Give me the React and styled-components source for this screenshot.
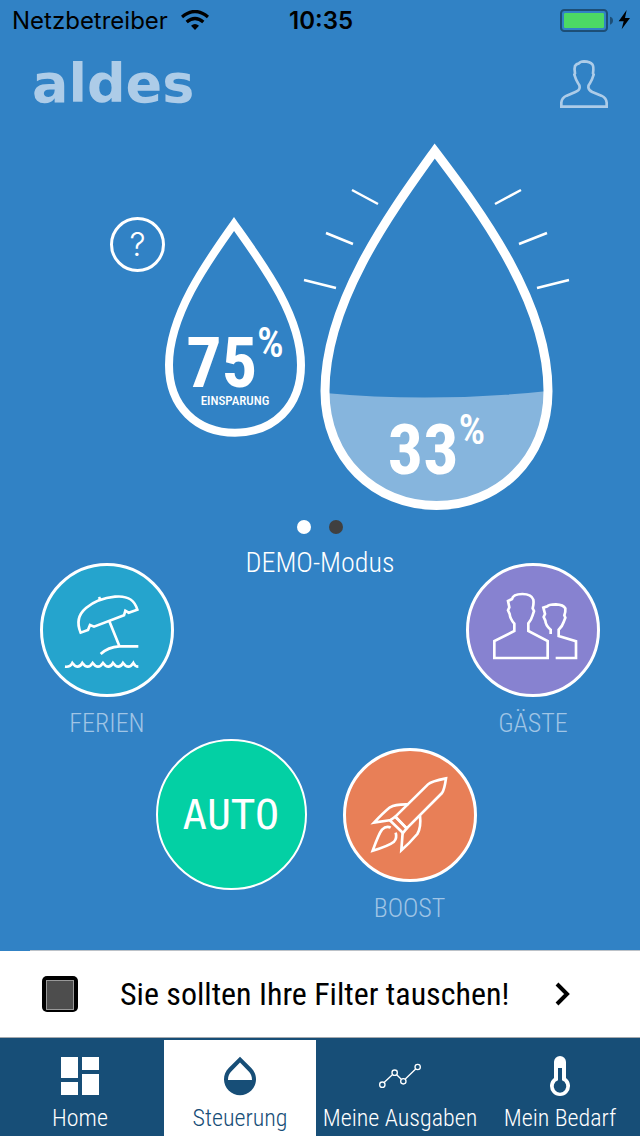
import React, { Component } from 'react'
import styled, { createGlobalStyle } from 'styled-components'

const GlobalStyle = createGlobalStyle`
  * {
    box-sizing: border-box;
  }

  body {
    margin: 0;
    background: #3182c5;
    font-family: "Roboto Condensed", "Liberation Sans Narrow", "Liberation Sans", sans-serif;
  }

  button {
    padding: 0;
    border: 0;
    background: none;
    color: inherit;
    font: inherit;
    cursor: pointer;
  }
`

const Page = styled.div`
  display: flex;
  flex-direction: column;
  min-height: 100vh;
  color: #fff;
`

const StatusBar = styled.div`
  display: grid;
  grid-template-columns: 1fr auto 1fr;
  align-items: center;
  height: 40px;
  padding: 0 10px 0 12px;
  color: #000;
  font-family: Inter, sans-serif;
  font-size: 24px;
`

const Carrier = styled.div`
  display: flex;
  align-items: center;
  gap: 13px;
`

const Clock = styled.time`
  font-weight: 600;
`

const Power = styled.div`
  display: flex;
  justify-content: flex-end;
`

const Header = styled.header`
  display: flex;
  align-items: center;
  justify-content: space-between;
  height: 88px;
  padding: 0 32px;
  color: #adcce8;
`

const Logo = styled.a`
  color: inherit;
  font-family: "DejaVu Sans", sans-serif;
  font-size: 54px;
  font-weight: 700;
  line-height: 60px;
  text-decoration: none;
`

const Account = styled.button`
  display: flex;
`

const Main = styled.main`
  display: flex;
  flex: 1;
  flex-direction: column;
`

const Drops = styled.section`
  display: flex;
  justify-content: center;
  padding: 16px 0 0 40px;
`

const Help = styled.button`
  width: 55px;
  height: 55px;
  margin-top: 73px;
  border: 3px solid #fff;
  border-radius: 50%;
  font-family: Inter, sans-serif;
  font-size: 32px;
  font-weight: 300;
  line-height: 48px;
`

const Drop = styled.div`
  display: grid;
  align-content: start;
  width: ${props => props.$width}px;
  margin-top: ${props => props.$top || 0}px;

  > * {
    grid-area: 1 / 1;
  }

  > svg {
    overflow: visible;
  }
`

const Reading = styled.div`
  display: flex;
  flex-direction: column;
  align-items: center;
  padding-top: ${props => props.$top}px;
`

const Value = styled.div`
  display: flex;
  align-items: flex-start;
  font-size: 70px;
  font-weight: 700;
  line-height: 60px;
`

const Percent = styled.span`
  font-size: 42px;
  font-weight: 500;
  line-height: 20px;
`

const Caption = styled.div`
  font-size: 13px;
  font-weight: 500;
  line-height: 16px;
`

const Dots = styled.div`
  display: flex;
  justify-content: center;
  gap: 18px;
  padding-top: 10px;
`

const Dot = styled.button`
  width: 14px;
  height: 14px;
  border-radius: 50%;
  background: ${props => (props.$active ? '#fff' : '#404040')};
`

const Modes = styled.section`
  display: flex;
  justify-content: space-between;
  padding: 13px 40px 0;
`

const Status = styled.div`
  font-size: 28px;
  font-weight: 300;
  line-height: 32px;
`

const CenterModes = styled.section`
  display: flex;
  justify-content: center;
  gap: 36px;
  padding: 0 8px 26px 0;
`

const Mode = styled.button`
  display: flex;
  flex-direction: column;
  align-items: center;
  align-self: flex-start;
  gap: 10px;
  margin-top: ${props => props.$top || 0}px;
`

const Disc = styled.span`
  display: flex;
  align-items: center;
  justify-content: center;
  width: ${props => props.$size || 134}px;
  height: ${props => props.$size || 134}px;
  border: ${props => props.$line || 3}px solid #fff;
  border-radius: 50%;
  background: ${props => props.$color};
`

const ModeName = styled.span`
  color: #a0c5e5;
  font-size: 26px;
  font-weight: 300;
  line-height: 32px;
`

const AutoText = styled.span`
  font-family: "DejaVu Sans Mono", monospace;
  font-size: 40px;
`

const Divider = styled.div`
  height: 1px;
  margin-left: 30px;
  background: #bcc2c8;
`

const Notice = styled.button`
  display: flex;
  align-items: center;
  height: 86px;
  padding: 0 69px 0 42px;
  background: #fff;
  color: #000;
  text-align: left;
`

const FilterIcon = styled.span`
  width: 36px;
  height: 36px;
  padding: 4px;
  border-radius: 5px;
  background: #000;

  &::before {
    content: "";
    display: block;
    height: 100%;
    border: 1px solid #999;
    background: #4d4d4d;
  }
`

const NoticeText = styled.span`
  flex: 1;
  padding-left: 42px;
  font-size: 32px;
  line-height: 40px;
`

const TabBar = styled.nav`
  display: flex;
  border-top: 1px solid #a5a9ad;
  background: #174e77;
`

const Tab = styled.a`
  display: flex;
  flex: 1 1 0;
  flex-direction: column;
  align-items: center;
  min-width: 0;
  height: 96px;
  margin: 2px 4px 0;
  padding-top: 12px;
  background: ${props => (props.$active ? '#fff' : 'none')};
  color: ${props => (props.$active ? '#174e77' : '#fff')};
  font-size: 24px;
  font-weight: 300;
  line-height: 36px;
  text-decoration: none;
  white-space: nowrap;
`

const Wifi = () => (
  <svg width="28" height="20" viewBox="543 30 84 60" fill="none" stroke="#000" strokeWidth="10">
    <path d="M546 51Q585 18 624 51" />
    <path d="M560 66Q585 45 610 66" />
    <path d="M573 77Q585 67 597 77L585 90Z" fill="#000" stroke="none" />
  </svg>
)

const Battery = () => (
  <svg width="70" height="23" viewBox="720 27 210 69">
    <rect x="723" y="30" width="138" height="63" rx="10" fill="none" stroke="#1d4e76" strokeWidth="6" />
    <rect x="732" y="39" width="120" height="45" rx="4" fill="#4cd964" />
    <path d="M870 50Q879 52 879 61.500Q879 71 870 74Z" fill="#1d4e76" />
    <path d="M920 30L896 64H911L905 88L930 54H915Z" fill="#000" />
  </svg>
)

const Person = () => (
  <svg width="48" height="48" viewBox="720 180 144 144" fill="none" stroke="currentColor" strokeWidth="8">
    <path d="M724 320V308Q725 294 740 287L766 276Q779 271 779 262Q779 255 775 251Q768 241 763 224L765 220Q762 207 765 198Q769 191 777 190Q781 184 792 184Q810 185 817 193Q822 200 819 220L821 224Q816 241 809 251Q805 255 805 262Q806 271 817 276L844 287Q859 294 860 308V320Z" />
  </svg>
)

const SmallDrop = () => (
  <svg width="140" height="220" viewBox="0 0 140 220">
    <path
      d="M69 7C42 45 4 98 4 148C4 190 32 215.700 70 215.700C108 215.700 136 190 136 148C136 98 96 45 69 7Z"
      fill="none"
      stroke="#fff"
      strokeWidth="8"
    />
  </svg>
)

const BigDrop = () => (
  <svg width="267" height="366" viewBox="0 0 267 366" fill="none" stroke="#fff">
    <path
      d="M22 249Q130 259 245 247C245 315 195 361.500 133.500 361.500C72 361.500 22 315 22 249Z"
      fill="#86b5dd"
      stroke="none"
    />
    <path
      d="M131.700 7C88 68 22 158 22 247C22 315 72 361.500 133.500 361.500C195 361.500 245 315 245 247C245 158 178 68 131.700 7Z"
      strokeWidth="9"
    />
    <path
      d="M49 46L75 60M23 89L50 100M1 136L33 144M192 60L218 46M216 100L244 89M234 144L266 136"
      strokeWidth="2.500"
    />
  </svg>
)

const Beach = () => (
  <svg width="128" height="128" viewBox="69 168 384 384" fill="none" stroke="#fff" strokeWidth="8">
    <path d="M182 368C171 342 172 316 198 294C222 274 254 263 285 260C326 256 344 271 352 299L326 308L316 302L312 316L222 350L210 345L204 360Z" />
    <path d="M237 261L242 271M268 334L298 408M355 409H298Q264 411 242 432" />
    <path d="M135 470Q151 472 157 459Q165 470 173 470Q181 470 187 459Q195 470 203 470Q211 470 218 459Q226 470 234 470Q242 470 249 459Q257 470 265 470Q273 470 279 459Q287 470 295 470Q303 470 309 459Q317 470 325 470Q333 470 340 459Q345 470 355 470" />
  </svg>
)

const Guests = () => (
  <svg width="128" height="128" viewBox="88 79 384 384" fill="none" stroke="#fff" strokeWidth="8">
    <path d="M164 355V304L224 274V252Q211 237 210 223L205 212L209 203L205 184L217 178Q220 163 248 163Q276 163 281 180Q283 191 279 206L283 214L278 229Q275 241 266 251V274L324 304V355Z" />
    <path d="M333 283V270Q318 258 317 243L312 232L316 223L311 204L323 200Q327 194 349 194Q371 195 377 206Q378 217 374 227L377 234L372 247Q368 260 357 270V289L409 305V355H348" />
  </svg>
)

const Rocket = () => (
  <svg width="128" height="128" viewBox="76 63 384 384" fill="none" stroke="#fff" strokeWidth="8">
    <path d="M224 260L322 163Q331 154 376 145Q371 180 364 189L258 295Z" />
    <path d="M224 260L258 295L247 309L208 271Z" />
    <path d="M263 223Q224 222 208 232Q188 248 160 278L212 270M298 257Q302 292 290 312Q266 340 242 361L246 307" />
    <path d="M210 293Q197 286 184 299Q175 310 156 362Q205 347 220 335Q230 325 225 308" />
  </svg>
)

const Chevron = () => (
  <svg width="16" height="24" viewBox="0 0 16 24" fill="none" stroke="#000" strokeWidth="4">
    <path d="M2 2L12 12L2 22" />
  </svg>
)

const icons = {
  home: (
    <svg width="48" height="48" viewBox="168 66 144 144" fill="currentColor">
      <path d="M183 81h51v63h-51zM183 156h51v39h-51zM246 81h51v39h-51zM246 132h51v63h-51z" />
    </svg>
  ),
  control: (
    <svg width="48" height="48" viewBox="0 0 24 24" fill="currentColor">
      <path d="M17.660 8L12 2.350 6.340 8C4.780 9.560 4 11.640 4 13.640s.78 4.110 2.340 5.670 3.610 2.350 5.660 2.350 4.100-.79 5.660-2.350S20 15.640 20 13.640 19.220 9.560 17.660 8zM6 14c.01-2 .62-3.270 1.760-4.400L12 5.270l4.240 4.380C17.380 10.770 17.990 12 18 14H6z" />
    </svg>
  ),
  costs: (
    <svg width="48" height="48" viewBox="168 66 144 144" fill="none" stroke="currentColor" strokeWidth="4">
      <path d="M193 157L217 134M230 134L243 147M256 147L287 117" />
      <circle cx="187" cy="164" r="8" />
      <circle cx="224" cy="128" r="8" />
      <circle cx="250" cy="154" r="8" />
      <circle cx="293" cy="111" r="8" />
    </svg>
  ),
  demand: (
    <svg width="48" height="48" viewBox="648 66 144 144">
      <path d="M702 96A18 18 0 0 1 738 96V144A30 30 0 1 1 702 144Z" fill="currentColor" />
      <path d="M714 114H726V151A19 19 0 1 1 714 151Z" fill="#174e77" />
    </svg>
  ),
}

const tabs = [
  { id: 'home', label: 'Home' },
  { id: 'control', label: 'Steuerung' },
  { id: 'costs', label: 'Meine Ausgaben' },
  { id: 'demand', label: 'Mein Bedarf' },
]

export default class App extends Component {

  state = { tab: 'control', slide: 0 }

  render() {
    const { tab, slide } = this.state

    return (
      <Page>
        <GlobalStyle />
        <StatusBar>
          <Carrier>Netzbetreiber <Wifi /></Carrier>
          <Clock>10:35</Clock>
          <Power><Battery /></Power>
        </StatusBar>
        <Header>
          <Logo href="#">aldes</Logo>
          <Account aria-label="Konto"><Person /></Account>
        </Header>
        <Main>
          <Drops>
            <Help>?</Help>
            <Drop $width={138} $top={73}>
              <SmallDrop />
              <Reading $top={116}>
                <Value>75<Percent>%</Percent></Value>
                <Caption>EINSPARUNG</Caption>
              </Reading>
            </Drop>
            <Drop $width={267}>
              <BigDrop />
              <Reading $top={276}>
                <Value>33<Percent>%</Percent></Value>
              </Reading>
            </Drop>
          </Drops>
          <Dots>
            {[0, 1].map(i => (
              <Dot
                key={i}
                aria-label={`Seite ${i + 1}`}
                $active={slide === i}
                onClick={() => this.setState({ slide: i })}
              />
            ))}
          </Dots>
          <Modes>
            <Mode $top={16}>
              <Disc $color="#25a4cd"><Beach /></Disc>
              <ModeName>FERIEN</ModeName>
            </Mode>
            <Status>DEMO-Modus</Status>
            <Mode $top={16}>
              <Disc $color="#8782d0"><Guests /></Disc>
              <ModeName>GÄSTE</ModeName>
            </Mode>
          </Modes>
          <CenterModes>
            <Mode>
              <Disc $color="#03d0a4" $size={151} $line={2}><AutoText>AUTO</AutoText></Disc>
            </Mode>
            <Mode $top={9}>
              <Disc $color="#e87f57"><Rocket /></Disc>
              <ModeName>BOOST</ModeName>
            </Mode>
          </CenterModes>
        </Main>
        <Divider />
        <Notice>
          <FilterIcon />
          <NoticeText>Sie sollten Ihre Filter tauschen!</NoticeText>
          <Chevron />
        </Notice>
        <TabBar>
          {tabs.map(({ id, label }) => (
            <Tab
              key={id}
              href={`#${id}`}
              $active={tab === id}
              onClick={() => this.setState({ tab: id })}
            >
              {icons[id]}
              {label}
            </Tab>
          ))}
        </TabBar>
      </Page>
    )
  }
}
